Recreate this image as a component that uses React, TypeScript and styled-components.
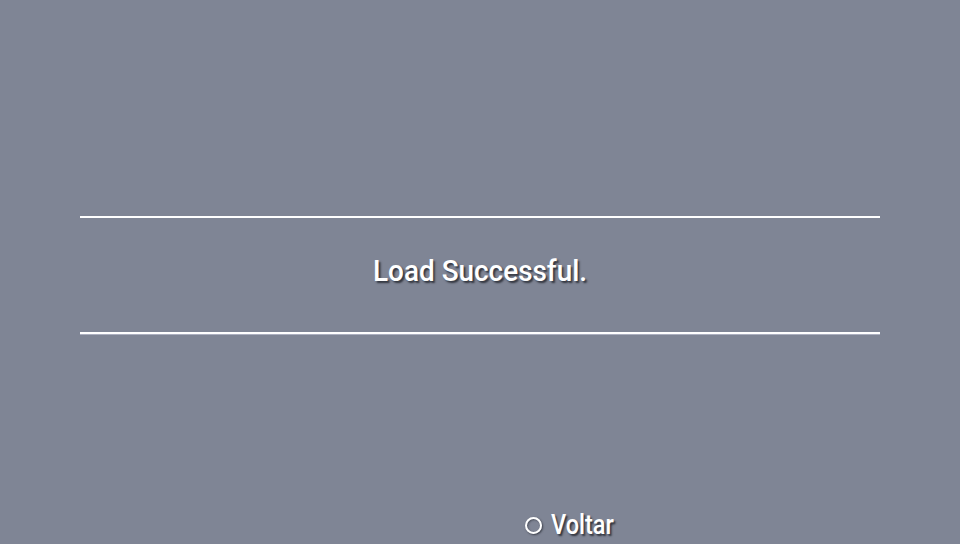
import { FC } from "react";
import styled, { createGlobalStyle } from "styled-components";

const GlobalStyle = createGlobalStyle`
  html, body {
    margin: 0;
    padding: 0;
    height: 100%;
  }
  body {
    background: #7f8595;
    font-family: Roboto, "Liberation Sans", sans-serif;
    overflow: hidden;
  }
`;

const Screen = styled.div`
  width: 960px;
  height: 544px;
  display: flex;
  flex-direction: column;
  background: #7f8595;
  overflow: hidden;
`;

const Panel = styled.section`
  margin: 216px auto 0;
  width: 800px;
  height: 118px;
  box-sizing: border-box;
  border-top: 2px solid #ffffff;
  border-bottom: 2px solid #ffffff;
  box-shadow: 0 1px 0 rgba(200, 204, 220, 0.6);
  display: flex;
  justify-content: center;
  padding-top: 35px;
`;

const Message = styled.h1`
  margin: 0;
  font-size: 30px;
  line-height: 35px;
  height: 35px;
  font-weight: 500;
  color: #ffffff;
  transform: scaleX(0.93);
  text-shadow: 2px 2px 2px rgba(30, 32, 40, 0.8);
`;

const Footer = styled.footer`
  margin-top: auto;
  margin-left: 525px;
  margin-bottom: 3px;
  display: flex;
  align-items: center;
  gap: 9px;
`;

const CircleIcon = styled.span`
  width: 13px;
  height: 13px;
  border: 2.5px solid #ffffff;
  border-radius: 50%;
  box-shadow: 1px 1px 2px rgba(30, 32, 40, 0.7),
    inset 1px 1px 2px rgba(30, 32, 40, 0.5);
`;

const Label = styled.span`
  display: inline-block;
  font-size: 27px;
  line-height: 32px;
  font-weight: 500;
  color: #ffffff;
  transform: scaleX(0.87);
  transform-origin: left center;
  text-shadow: 2px 2px 2px rgba(30, 32, 40, 0.8);
`;

const App: FC = () => {
  return (
    <>
      <GlobalStyle />
      <Screen>
        <Panel>
          <Message>Load Successful.</Message>
        </Panel>
        <Footer>
          <CircleIcon />
          <Label>Voltar</Label>
        </Footer>
      </Screen>
    </>
  );
};

export default App;
